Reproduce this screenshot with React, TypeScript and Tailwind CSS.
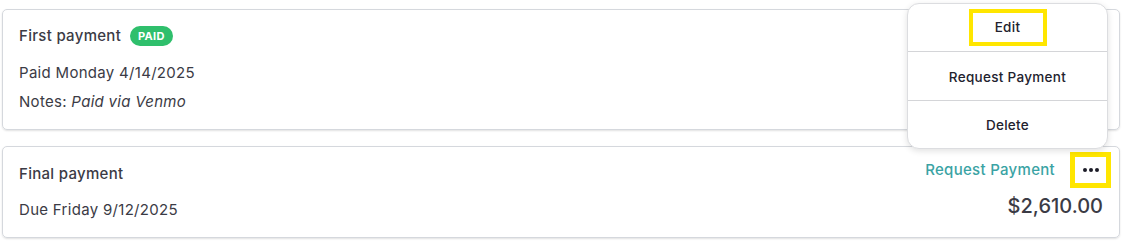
import { useState } from "react"

function Badge({ children }: { children: string }) {
  return (
    <span className="inline-flex h-5 items-center rounded-full bg-[#2fbf6c] px-[8px] text-[11px] font-bold tracking-wide text-white">
      {children}
    </span>
  )
}

export default function App() {
  const [open] = useState(true)

  return (
    <div className="relative h-[252px] w-[1133px] bg-white font-['Inter',sans-serif] tracking-[0.3px] text-[#3b3b45]">
      <div className="flex flex-col gap-4 pl-[2px] pr-[13px] pt-[9px]">
        {/* first payment */}
        <div className="h-[121px] rounded-[5px] border border-[#d5d8dd] px-4 pt-4 shadow-[0_1px_2px_rgba(0,0,0,0.12)]">
          <div className="flex h-5 items-center gap-[9px]">
            <span className="text-[15px] font-medium">First payment</span>
            <Badge>PAID</Badge>
          </div>
          <p className="mt-[16px] text-[15px] leading-[22px]">Paid Monday 4/14/2025</p>
          <p className="mt-[7px] text-[15px] leading-[22px]">
            Notes: <span className="italic">Paid via Venmo</span>
          </p>
        </div>

        {/* final payment */}
        <div className="flex h-[92px] justify-between rounded-[5px] border border-[#d5d8dd] px-4 shadow-[0_1px_2px_rgba(0,0,0,0.12)]">
          <div className="pt-[16px]">
            <p className="text-[15px] font-medium leading-[22px]">Final payment</p>
            <p className="mt-[14px] text-[15px] leading-[22px]">Due Friday 9/12/2025</p>
          </div>
          <div className="flex flex-col items-end pt-[10px]">
            <div className="flex items-center gap-5">
              <button className="text-[15px] font-medium text-[#3aa3a4]">Request Payment</button>
              <button className="mr-[-3px] flex h-[26px] w-[31px] items-center justify-center gap-[2px] bg-white outline-[5px] outline-[#ffe600]">
                <span className="h-[4px] w-[4px] rounded-full bg-[#1c1c28]" />
                <span className="h-[4px] w-[4px] rounded-full bg-[#1c1c28]" />
                <span className="h-[4px] w-[4px] rounded-full bg-[#1c1c28]" />
              </button>
            </div>
            <p className="mt-[9px] text-[20px] font-medium leading-[28px] tracking-normal">$2,610.00</p>
          </div>
        </div>
      </div>

      {/* actions menu */}
      {open && (
        <div className="absolute left-[907px] top-[3px] w-[201px] overflow-hidden rounded-[12px] border border-[#dcdde0] bg-white text-[13.5px] font-medium text-[#22222e] shadow-[0_2px_6px_rgba(0,0,0,0.12)]">
          <div className="flex h-[48px] items-center justify-center border-b border-[#d4d5d8]">
            <span className="flex h-[29px] w-[70px] items-center justify-center outline-4 outline-[#ffe600]">
              Edit
            </span>
          </div>
          <div className="flex h-[49px] items-center justify-center border-b border-[#d4d5d8] pt-[2px]">
            Request Payment
          </div>
          <div className="flex h-[47px] items-center justify-center pt-[2px]">
            Delete
          </div>
        </div>
      )}
    </div>
  )
}
